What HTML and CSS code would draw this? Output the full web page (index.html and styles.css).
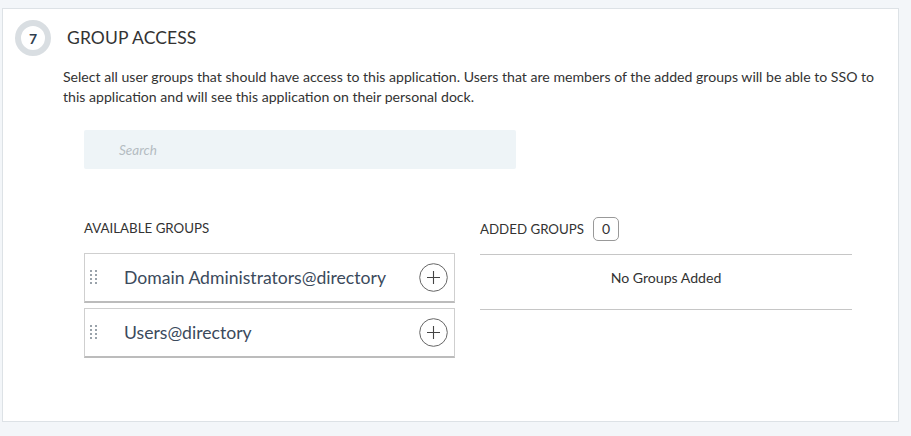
FILE: index.html
```html
<!DOCTYPE html>
<html>
<head>
<meta charset="utf-8">
<link rel="stylesheet" href="styles.css">
</head>
<body>
<div class="card">
  <div class="header">
    <div class="step">7</div>
    <h2 class="title">GROUP ACCESS</h2>
  </div>
  <p class="desc">Select all user groups that should have access to this application. Users that are members of the added groups will be able to SSO to this application and will see this application on their personal dock.</p>
  <div class="search"><span class="placeholder">Search</span></div>
  <div class="columns">
    <div class="col-left">
      <div class="col-label">AVAILABLE GROUPS</div>
      <div class="group">
        <span class="handle"><i></i><i></i><i></i><i></i><i></i><i></i><i></i><i></i></span>
        <span class="group-name">Domain Administrators@directory</span>
        <span class="add"><svg width="29" height="29" viewBox="0 0 29 29"><circle cx="14.5" cy="14.5" r="13.8" fill="none" stroke="#666" stroke-width="1"/><path d="M14.5 8v13M8 14.5h13" stroke="#444" stroke-width="1.1"/></svg></span>
      </div>
      <div class="group">
        <span class="handle"><i></i><i></i><i></i><i></i><i></i><i></i><i></i><i></i></span>
        <span class="group-name">Users@directory</span>
        <span class="add"><svg width="29" height="29" viewBox="0 0 29 29"><circle cx="14.5" cy="14.5" r="13.8" fill="none" stroke="#666" stroke-width="1"/><path d="M14.5 8v13M8 14.5h13" stroke="#444" stroke-width="1.1"/></svg></span>
      </div>
    </div>
    <div class="col-right">
      <div class="col-label added">ADDED GROUPS <span class="count">0</span></div>
      <div class="empty">No Groups Added</div>
    </div>
  </div>
</div>
</body>
</html>
```
FILE: styles.css
```css
html, body {
  margin: 0;
  padding: 0;
  background: #f3f6f9;
}
body {
  font-family: Lato, "Open Sans", sans-serif;
  color: #333;
  padding: 8px 12px 0 2px;
  height: 436px;
  box-sizing: border-box;
}
.card {
  background: #fff;
  border: 1px solid #dde2e6;
  height: 414px;
  box-sizing: border-box;
  padding: 11px 18px 0 12px;
}
.header {
  display: flex;
  align-items: center;
}
.step {
  width: 36px;
  height: 36px;
  box-sizing: border-box;
  border: 6px solid #d9dee2;
  border-radius: 50%;
  display: flex;
  align-items: center;
  justify-content: center;
  font-weight: 700;
  font-size: 14px;
  color: #2f3e4f;
}
.title {
  margin: 0 0 2px 16px;
  font-weight: 400;
  font-size: 17.5px;
  color: #333;
  letter-spacing: 0.1px;
}
.desc {
  margin: 11px 0 0 48px;
  font-size: 14.1px;
  line-height: 20px;
  color: #333;
}
.search {
  margin: 23px 0 0 69px;
  width: 432px;
  height: 39px;
  background: #eef4f7;
  border-radius: 2px;
  display: flex;
  align-items: center;
}
.placeholder {
  margin-left: 35px;
  font-style: italic;
  font-size: 13.5px;
  color: #b4bcc2;
}
.columns {
  display: flex;
  margin: 47px 0 0 69px;
}
.col-left {
  width: 371px;
}
.col-label {
  font-size: 13.3px;
  color: #333;
  height: 24px;
  line-height: 24px;
  margin-bottom: 13px;
}
.group {
  height: 50px;
  box-sizing: border-box;
  border: 1px solid #cfcfcf;
  border-bottom: 2px solid #bcbcbc;
  display: flex;
  align-items: center;
  margin-bottom: 5px;
  padding: 0 6px 0 5px;
}
.handle {
  display: grid;
  grid-template-columns: 2px 2px;
  grid-auto-rows: 2px;
  column-gap: 3px;
  row-gap: 2px;
  width: 7px;
  margin-top: -2px;
}
.handle i {
  background: #9aa3ab;
}
.group-name {
  margin-left: 27px;
  font-size: 17.6px;
  color: #3b4a5c;
  flex: 1;
}
.add {
  display: flex;
  margin-top: -1px;
}
.col-right {
  margin-left: 25px;
  width: 372px;
}
.added {
  display: flex;
  align-items: center;
  margin-top: 1px;
  margin-bottom: 13px;
}
.count {
  display: inline-flex;
  align-items: center;
  justify-content: center;
  width: 26px;
  height: 24px;
  box-sizing: border-box;
  border: 1px solid #999;
  border-radius: 5px;
  margin-left: 9px;
  font-size: 14px;
}
.empty {
  border-top: 1px solid #c6c6c6;
  border-bottom: 1px solid #c6c6c6;
  height: 56px;
  box-sizing: border-box;
  display: flex;
  align-items: center;
  justify-content: center;
  font-size: 14.1px;
  color: #333;
  padding-bottom: 9px;
}
```
